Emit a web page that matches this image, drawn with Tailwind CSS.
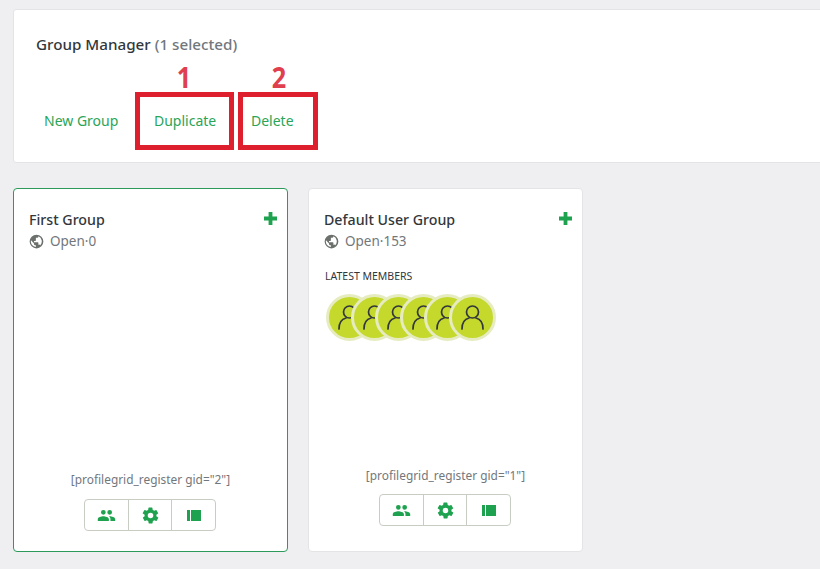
<!DOCTYPE html>
<html lang="en">
<head>
    <meta charset="UTF-8">
    <meta name="viewport" content="width=device-width, initial-scale=1.0">
    <script src="https://cdn.jsdelivr.net/npm/@tailwindcss/browser@4"></script>
    <title>Group Manager</title>
</head>
<body class="bg-[#efeff1] font-['Noto_Sans',sans-serif] h-[569px] w-[820px] overflow-hidden">
    <div class="pt-[9px] pl-[13px]">
        <!-- header -->
        <div class="relative bg-white border border-[#e4e4e6] rounded-[3px] h-[154px] w-[830px]">
            <div class="pt-[24px] pl-[22px] text-[15.2px] leading-[20px] font-medium text-[#32373c]">Group Manager <span class="text-[#72777c]">(1 selected)</span></div>
            <div class="flex mt-[56px] pl-[30px] text-[14px] leading-[22px] text-[#2aa558]">
                <span class="w-[110px]">New Group</span>
                <span class="w-[97px]">Duplicate</span>
                <span>Delete</span>
            </div>

            <!-- red annotations -->
            <div class="absolute left-[121px] top-[82px] w-[99px] h-[58px] border-[5px] border-[#de1f2e]"></div>
            <div class="absolute left-[224px] top-[82px] w-[80px] h-[58px] border-[5px] border-[#de1f2e]"></div>
            <div class="absolute left-[155px] top-[52px] w-[30px] text-center scale-x-90 text-[28px] leading-[30px] font-bold text-[#e0404e]">1</div>
            <div class="absolute left-[250px] top-[52px] w-[30px] text-center scale-x-90 text-[28px] leading-[30px] font-bold text-[#e0404e]">2</div>
        </div>

        <!-- group cards -->
        <div class="flex gap-[20px] mt-[25px]">
            <div class="relative bg-white border border-[#2b9a5b] rounded-[4px] w-[275px] h-[364px]">
                <div class="flex justify-between pt-[21px] pl-[15px] pr-[10px]">
                    <div class="text-[14.2px] leading-[20px] font-medium text-[#32373c]">First Group</div>
                    <svg class="w-[13px] h-[13px] mt-[2px]" viewBox="0 0 13 13"><path fill="#1fa24f" d="M4.6 0h3.8v4.6H13v3.8H8.4V13H4.6V8.4H0V4.6h4.6z"/></svg>
                </div>
                <div class="flex items-center pl-[15px] mt-[1px] text-[13.5px] leading-[20px] text-[#72777c]">
                    <svg class="w-[15px] h-[15px] mr-[6px]" viewBox="0 0 24 24"><path fill="#6b706c" d="M12 1a11 11 0 1 0 0 22 11 11 0 0 0 0-22zm-1 19.9A9 9 0 0 1 3.2 10L8 15v1a2 2 0 0 0 2 2h1zm7-2.9a2 2 0 0 0-2-1h-1v-3a1 1 0 0 0-1-1H8v-2h2a1 1 0 0 0 1-1V6h2a2 2 0 0 0 2-2v-.4a9 9 0 0 1 3 14.4z"/></svg>
                    <span>Open·0</span>
                </div>
                <div class="absolute left-0 right-0 top-[281px] text-center text-[11.9px] leading-[18px] text-[#72777c]">[profilegrid_register gid="2"]</div>
                <div class="absolute left-[70px] top-[310px] flex h-[32px] border border-[#c8cdc4] rounded-[4px]">
                    <div class="w-[44px] flex items-center justify-center border-r border-[#c8cdc4]">
                        <svg class="w-[19px] h-[19px]" viewBox="0 0 24 24"><path fill="#1fa24f" d="M16 11a3 3 0 1 0 0-6 3 3 0 0 0 0 6zm-8 0a3 3 0 1 0 0-6 3 3 0 0 0 0 6zm0 2c-2.300 0-7 1.200-7 3.500V19h14v-2.500C15 14.200 10.300 13 8 13zm8 0h-1c1.200.9 2 2 2 3.500V19h6v-2.500c0-2.300-4.700-3.500-7-3.500z"/></svg>
                    </div>
                    <div class="w-[43px] flex items-center justify-center border-r border-[#c8cdc4]">
                        <svg class="w-[19px] h-[19px]" viewBox="0 0 24 24"><path fill="#1fa24f" d="M19.400 13a7.500 7.500 0 0 0 0-2l2.100-1.600a.5.5 0 0 0 .1-.6l-2-3.500a.5.5 0 0 0-.6-.2l-2.500 1a7.300 7.300 0 0 0-1.700-1l-.4-2.700a.5.5 0 0 0-.5-.4h-4a.5.5 0 0 0-.5.4l-.4 2.700a7.300 7.300 0 0 0-1.700 1l-2.500-1a.5.5 0 0 0-.6.2l-2 3.500a.5.5 0 0 0 .1.6L4.600 11a7.500 7.500 0 0 0 0 2l-2.100 1.600a.5.5 0 0 0-.1.6l2 3.500c.1.200.4.300.6.200l2.500-1c.5.400 1.100.700 1.700 1l.4 2.700c0 .2.200.4.500.4h4c.3 0 .5-.2.500-.4l.4-2.700c.6-.3 1.200-.6 1.700-1l2.500 1c.2.100.5 0 .6-.2l2-3.500a.5.5 0 0 0-.1-.6zM12 15.500a3.500 3.500 0 1 1 0-7 3.500 3.500 0 0 1 0 7z"/></svg>
                    </div>
                    <div class="w-[43px] flex items-center justify-center">
                        <svg class="w-[14px] h-[11px]" viewBox="0 0 14 11"><path fill="#1fa24f" d="M0 0h3v11H0zM4 0h10v11H4z"/></svg>
                    </div>
                </div>
            </div>

            <div class="relative bg-white border border-[#e4e4e6] rounded-[4px] w-[275px] h-[364px]">
                <div class="flex justify-between pt-[21px] pl-[15px] pr-[10px]">
                    <div class="text-[14.2px] leading-[20px] font-medium text-[#32373c]">Default User Group</div>
                    <svg class="w-[13px] h-[13px] mt-[2px]" viewBox="0 0 13 13"><path fill="#1fa24f" d="M4.6 0h3.8v4.6H13v3.8H8.4V13H4.6V8.4H0V4.6h4.6z"/></svg>
                </div>
                <div class="flex items-center pl-[15px] mt-[1px] text-[13.5px] leading-[20px] text-[#72777c]">
                    <svg class="w-[15px] h-[15px] mr-[6px]" viewBox="0 0 24 24"><path fill="#6b706c" d="M12 1a11 11 0 1 0 0 22 11 11 0 0 0 0-22zm-1 19.900A9 9 0 0 1 3.200 10L8 15v1a2 2 0 0 0 2 2h1zm7-2.900a2 2 0 0 0-2-1h-1v-3a1 1 0 0 0-1-1H8v-2h2a1 1 0 0 0 1-1V6h2a2 2 0 0 0 2-2v-.4a9 9 0 0 1 3 14.400z"/></svg>
                    <span>Open·153</span>
                </div>
                <div class="pl-[16px] mt-[17px] text-[10.5px] leading-[16px] text-[#32373c]">LATEST MEMBERS</div>
                <div class="flex pl-[17px] mt-[10px]">
                    <div class="w-[47px] h-[47px] shrink-0 rounded-full bg-[#c5d82c] border-[3px] border-[#e6ecc0] flex items-center justify-center">
                        <svg class="w-[29px] h-[29px]" viewBox="0 0 29 29" fill="none" stroke="#32373c" stroke-width="1.700" stroke-linecap="round"><circle cx="14.500" cy="9" r="6"/><path d="M4 26c0-6 3-10 7-11M25 26c0-6-3-10-7-11"/></svg>
                    </div>
                    <div class="w-[47px] h-[47px] shrink-0 -ml-[22.400px] rounded-full bg-[#c5d82c] border-[3px] border-[#e6ecc0] flex items-center justify-center">
                        <svg class="w-[29px] h-[29px]" viewBox="0 0 29 29" fill="none" stroke="#32373c" stroke-width="1.700" stroke-linecap="round"><circle cx="14.500" cy="9" r="6"/><path d="M4 26c0-6 3-10 7-11M25 26c0-6-3-10-7-11"/></svg>
                    </div>
                    <div class="w-[47px] h-[47px] shrink-0 -ml-[22.400px] rounded-full bg-[#c5d82c] border-[3px] border-[#e6ecc0] flex items-center justify-center">
                        <svg class="w-[29px] h-[29px]" viewBox="0 0 29 29" fill="none" stroke="#32373c" stroke-width="1.700" stroke-linecap="round"><circle cx="14.500" cy="9" r="6"/><path d="M4 26c0-6 3-10 7-11M25 26c0-6-3-10-7-11"/></svg>
                    </div>
                    <div class="w-[47px] h-[47px] shrink-0 -ml-[22.400px] rounded-full bg-[#c5d82c] border-[3px] border-[#e6ecc0] flex items-center justify-center">
                        <svg class="w-[29px] h-[29px]" viewBox="0 0 29 29" fill="none" stroke="#32373c" stroke-width="1.700" stroke-linecap="round"><circle cx="14.500" cy="9" r="6"/><path d="M4 26c0-6 3-10 7-11M25 26c0-6-3-10-7-11"/></svg>
                    </div>
                    <div class="w-[47px] h-[47px] shrink-0 -ml-[22.400px] rounded-full bg-[#c5d82c] border-[3px] border-[#e6ecc0] flex items-center justify-center">
                        <svg class="w-[29px] h-[29px]" viewBox="0 0 29 29" fill="none" stroke="#32373c" stroke-width="1.700" stroke-linecap="round"><circle cx="14.500" cy="9" r="6"/><path d="M4 26c0-6 3-10 7-11M25 26c0-6-3-10-7-11"/></svg>
                    </div>
                    <div class="w-[47px] h-[47px] shrink-0 -ml-[22.400px] rounded-full bg-[#c5d82c] border-[3px] border-[#e6ecc0] flex items-center justify-center">
                        <svg class="w-[29px] h-[29px]" viewBox="0 0 29 29" fill="none" stroke="#32373c" stroke-width="1.700" stroke-linecap="round"><circle cx="14.500" cy="9" r="6"/><path d="M4 26c0-6 3-10 7-11M25 26c0-6-3-10-7-11"/></svg>
                    </div>
                </div>
                <div class="absolute left-0 right-0 top-[277px] text-center text-[11.9px] leading-[18px] text-[#72777c]">[profilegrid_register gid="1"]</div>
                <div class="absolute left-[70px] top-[305px] flex h-[32px] border border-[#c8cdc4] rounded-[4px]">
                    <div class="w-[44px] flex items-center justify-center border-r border-[#c8cdc4]">
                        <svg class="w-[19px] h-[19px]" viewBox="0 0 24 24"><path fill="#1fa24f" d="M16 11a3 3 0 1 0 0-6 3 3 0 0 0 0 6zm-8 0a3 3 0 1 0 0-6 3 3 0 0 0 0 6zm0 2c-2.300 0-7 1.200-7 3.500V19h14v-2.500C15 14.200 10.300 13 8 13zm8 0h-1c1.200.9 2 2 2 3.500V19h6v-2.500c0-2.300-4.700-3.500-7-3.500z"/></svg>
                    </div>
                    <div class="w-[43px] flex items-center justify-center border-r border-[#c8cdc4]">
                        <svg class="w-[19px] h-[19px]" viewBox="0 0 24 24"><path fill="#1fa24f" d="M19.400 13a7.500 7.500 0 0 0 0-2l2.100-1.600a.5.5 0 0 0 .1-.6l-2-3.500a.5.5 0 0 0-.6-.2l-2.500 1a7.300 7.300 0 0 0-1.700-1l-.4-2.700a.5.5 0 0 0-.5-.4h-4a.5.5 0 0 0-.5.4l-.4 2.700a7.300 7.300 0 0 0-1.700 1l-2.500-1a.5.5 0 0 0-.6.2l-2 3.500a.5.5 0 0 0 .1.6L4.600 11a7.500 7.500 0 0 0 0 2l-2.100 1.600a.5.5 0 0 0-.1.6l2 3.500c.1.200.4.300.6.200l2.500-1c.5.400 1.100.700 1.700 1l.4 2.700c0 .2.200.4.500.4h4c.3 0 .5-.2.500-.4l.4-2.700c.6-.3 1.200-.6 1.700-1l2.500 1c.2.100.5 0 .6-.2l2-3.500a.5.5 0 0 0-.1-.6zM12 15.500a3.500 3.500 0 1 1 0-7 3.500 3.500 0 0 1 0 7z"/></svg>
                    </div>
                    <div class="w-[43px] flex items-center justify-center">
                        <svg class="w-[14px] h-[11px]" viewBox="0 0 14 11"><path fill="#1fa24f" d="M0 0h3v11H0zM4 0h10v11H4z"/></svg>
                    </div>
                </div>
            </div>
        </div>
    </div>
</body>
</html>
